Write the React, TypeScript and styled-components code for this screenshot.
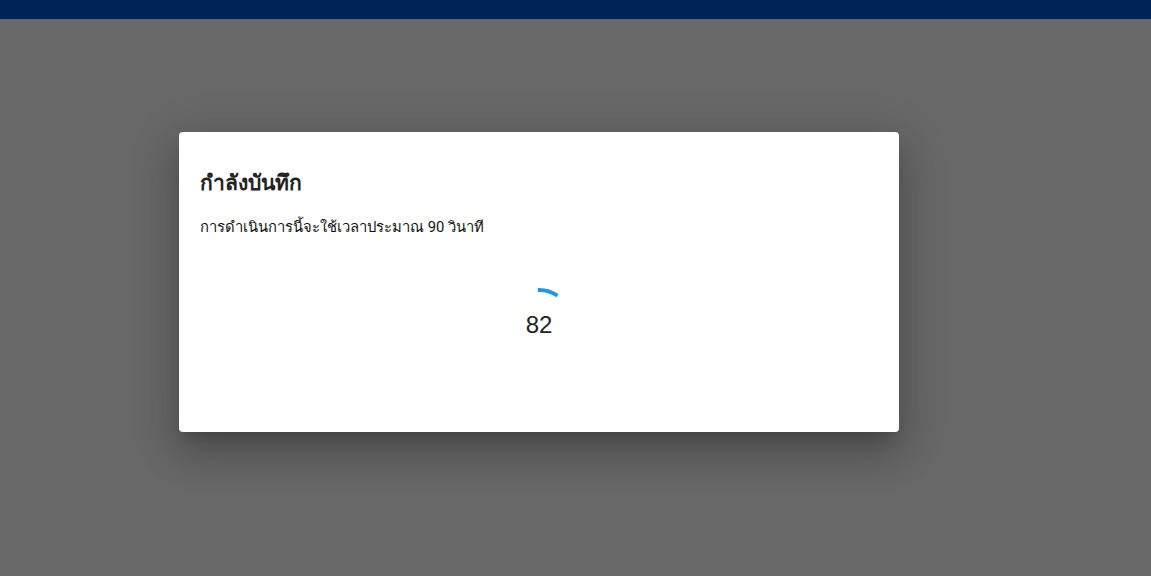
import styled, { createGlobalStyle } from "styled-components";

const GlobalStyle = createGlobalStyle`
  html, body {
    margin: 0;
    padding: 0;
    height: 100%;
  }
  body {
    font-family: Roboto, "Noto Sans", "DejaVu Sans", sans-serif;
    background: #fff;
  }
  #root {
    height: 100%;
  }
`;

const Page = styled.div`
  position: relative;
  height: 100vh;
  overflow: hidden;
  background: #fff;
`;

const TopBar = styled.header`
  height: 19px;
  background: #002357;
`;

// dimmed backdrop, dialog sits on top of it
const Backdrop = styled.div`
  position: absolute;
  inset: 19px 0 0 0;
  background: #686868;
  display: flex;
  align-items: flex-start;
  justify-content: flex-start;
  padding: 113px 0 0 179px;
`;

const Dialog = styled.section`
  width: 720px;
  height: 300px;
  box-sizing: border-box;
  background: #fff;
  border-radius: 4px;
  box-shadow: 0 11px 15px -7px rgba(0, 0, 0, 0.2),
    0 24px 38px 3px rgba(0, 0, 0, 0.14), 0 9px 46px 8px rgba(0, 0, 0, 0.12);
  padding: 37px 21px 0;
  display: flex;
  flex-direction: column;
`;

const Title = styled.h2`
  margin: 0;
  font-size: 21px;
  line-height: 28px;
  font-weight: 700;
  color: #222;
`;

const Message = styled.p`
  margin: 18px 0 0;
  font-size: 14.8px;
  line-height: 24px;
  color: #111;
`;

const SpinnerBox = styled.div`
  position: relative;
  align-self: center;
  width: 70px;
  height: 70px;
  margin: 49px 0 0 0;
`;

const Count = styled.span`
  position: absolute;
  inset: 0;
  display: flex;
  align-items: center;
  justify-content: center;
  padding-top: 4px;
  font-family: "Liberation Sans", Arial, sans-serif;
  font-size: 24px;
  color: #222;
`;

function Spinner() {
  const r = 33;
  const c = 2 * Math.PI * r;
  const arc = c * 0.1;
  return (
    <svg width="70" height="70" viewBox="0 0 70 70">
      <circle
        cx="35"
        cy="35"
        r={r}
        fill="none"
        stroke="#1d98ee"
        strokeWidth="4"
        strokeDasharray={`${arc} ${c}`}
        transform="rotate(-92 35 35)"
      />
    </svg>
  );
}

export default function App() {
  return (
    <>
      <GlobalStyle />
      <Page>
        <TopBar />
        <Backdrop>
          <Dialog>
            <Title>กำลังบันทึก</Title>
            <Message>การดำเนินการนี้จะใช้เวลาประมาณ 90 วินาที</Message>
            <SpinnerBox>
              <Spinner />
              <Count>82</Count>
            </SpinnerBox>
          </Dialog>
        </Backdrop>
      </Page>
    </>
  );
}
